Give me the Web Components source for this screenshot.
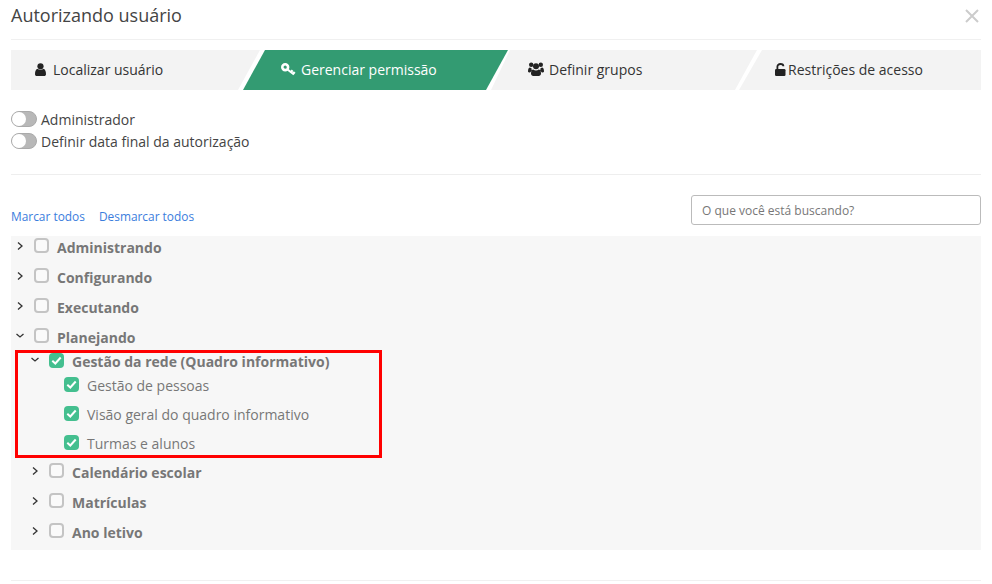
<!DOCTYPE html>
<html lang="pt-BR"><head><meta charset="utf-8"><title>Autorizando usuário</title>
<style>
html,body{margin:0;height:584px;overflow:hidden;background:#fff;font-family:"Open Sans",sans-serif;color:#333}
</style></head><body>
<auth-modal></auth-modal>
<script>
const def=(name,html)=>customElements.define(name,class extends HTMLElement{
  constructor(){super();this.attachShadow({mode:'open'}).innerHTML=html(this);}
});
const ICONS={
 user:'<svg width="11" height="13" viewBox="0 0 11 13"><circle cx="5.5" cy="3.3" r="3.1" fill="#222"/><path d="M0 11.2C0 8 1 6.2 2.6 5.8 3.4 6.5 4.4 7 5.5 7s2.100-.5 2.900-1.200C10 6.200 11 8 11 11.200 11 12.300 10.200 13 9.200 13H1.800C.8 13 0 12.300 0 11.200Z" fill="#222"/></svg>',
 key:'<svg width="15" height="13" viewBox="0 0 15 13"><circle cx="4.200" cy="4.200" r="2.900" fill="none" stroke="#fff" stroke-width="2.600"/><path d="M6.500 6.500 13 11.500M10 9l1.600-1.800M12.200 10.800l1.500-1.700" fill="none" stroke="#fff" stroke-width="2.200"/></svg>',
 group:'<svg width="16" height="14" viewBox="0 0 16 14"><g fill="#222"><circle cx="3.200" cy="2.800" r="2.200"/><circle cx="12.800" cy="2.800" r="2.200"/><path d="M0 9.500C0 7 .8 5.600 2 5.600c.6.500 1 .7 1.700.8-.3.800-.1 1.800.6 2.600C3 9.400 2.300 10.200 2.100 10.500 1 10.500 0 10.300 0 9.500ZM16 9.500C16 7 15.200 5.600 14 5.600c-.6.500-1 .7-1.700.8.300.8.100 1.800-.6 2.600 1.300.4 2 1.200 2.200 1.500 1.100 0 2.100-.2 2.100-1Z"/><circle cx="8" cy="4.300" r="3"/><path d="M3 11.500C3 9.200 4 7.800 5.200 7.600 6 8.200 7 8.500 8 8.500s2-.3 2.800-.9C12 7.800 13 9.200 13 11.500c0 1.500-1 2.500-2.300 2.500H5.300C4 14 3 13 3 11.500Z"/></g></svg>',
 unlock:'<svg width="11" height="13" viewBox="0 0 11 13"><path d="M2.400 6.500V3.600C2.400 1.900 3.700 1 5.400 1S8.400 1.900 8.400 3.200" fill="none" stroke="#222" stroke-width="1.800"/><rect x="0" y="6" width="10.500" height="7" rx="1.200" fill="#222"/></svg>'
};
def('wizard-tab',h=>`<style>
:host{display:flex;align-items:center;height:40px;box-sizing:border-box;padding-bottom:2px;background:#f3f3f3;color:#333;font-size:14px;white-space:nowrap;flex:none}
:host([active]){background:#339b72;color:#fff}
.i{display:flex;margin-right:var(--g,7px)}
</style><span class="i">${ICONS[h.getAttribute('icon')]}</span><slot></slot>`);
def('wizard-steps',()=>`<style>
:host{display:flex;margin:0 11px;height:40px}
::slotted(wizard-tab){margin-left:-17px}
::slotted(wizard-tab:first-child){margin-left:0;width:249px;padding-left:24px;clip-path:polygon(0 0,100% 0,calc(100% - 22px) 100%,0 100%)}
::slotted(wizard-tab:nth-child(2)){width:265px;padding-left:38px;clip-path:polygon(22px 0,100% 0,calc(100% - 22px) 100%,0 100%)}
::slotted(wizard-tab:nth-child(3)){margin-left:-17px;width:266px;padding-left:37px;clip-path:polygon(19px 0,100% 0,calc(100% - 22px) 100%,0 100%)}
::slotted(wizard-tab:nth-child(4)){margin-left:-18px;width:242px;padding-left:36px;clip-path:polygon(23px 0,100% 0,100% 100%,0 100%)}
</style><slot></slot>`);
def('toggle-line',()=>`<style>
:host{display:flex;align-items:center;height:22px;font-size:14px;color:#444}
.t{width:26px;height:16px;box-sizing:border-box;border-radius:8px;background:#b8b8b8;border:1px solid #aaa;margin-right:4px;flex:none}
.k{display:block;width:14px;height:14px;border-radius:50%;background:#fff}
</style><span class="t"><span class="k"></span></span><slot></slot>`);
def('tree-row',h=>{
 const lvl=+h.getAttribute('level')||0,st=h.getAttribute('state');
 const chev=st==='open'?'<path d="M.5 2 4 5 7.500 2"/>':st==='closed'?'<path d="M2 .5 6 4 2 7.500"/>':'';
 const on=h.hasAttribute('checked');
 return `<style>
:host{display:flex;align-items:center;height:22px;padding-left:${lvl*15}px;font-size:14px;color:#777;white-space:nowrap}
:host([bold]){font-weight:700}
.c{width:8px;height:8px;margin:-3px 10px 0 5px;flex:none;display:block}
.c path{fill:none;stroke:#333;stroke-width:1.300}
.b{width:15px;height:15px;box-sizing:border-box;border:2px solid #c4c4c4;border-radius:4px;background:#fafafa;margin:var(--m,-3px) 8px 0 0;flex:none;display:flex}
.b.on{background:#44bf8f;border:0}
.s{width:23px;flex:none}
</style>${chev?`<svg class="c" viewBox="0 0 8 8">${chev}</svg>`:'<span class="s"></span>'}<span class="b ${on?'on':''}">${on?'<svg width="15" height="15" viewBox="0 0 15 15"><path d="M3.300 7.800 6.300 10.500 11.700 4.500" fill="none" stroke="#fff" stroke-width="2"/></svg>':''}</span><slot></slot>`;
});
def('auth-modal',()=>`<style>
:host{display:block;height:584px;overflow:hidden;box-sizing:border-box}
.head{display:flex;justify-content:space-between;align-items:center;height:30px;margin:0 11px;border-bottom:1px solid #f0f0f0;padding-bottom:9px}
h1{margin:0;font-size:18px;font-weight:400;color:#444;line-height:30px}
.x{display:block;margin-right:2px;margin-top:2px}
wizard-steps{margin-top:10px}
.tog{margin:18px 11px 0;display:block}
.sep{height:1px;background:#eee;margin:22px 11px 0}
.bar{display:flex;justify-content:space-between;align-items:flex-end;margin:20px 11px 0;height:30px}
.links{display:flex;gap:14px;font-size:11.9px;color:#3b7ddd;line-height:16px;margin-bottom:1px}
.links a{color:inherit;text-decoration:none}
.search{width:290px;height:30px;box-sizing:border-box;border:1px solid #bbb;border-radius:3px;padding-left:10px;display:flex;align-items:center;font-size:12px;color:#777}
.tree{background:#f7f7f7;margin:11px 11px 0;height:314px;box-sizing:border-box}
.tree>tree-row{margin-bottom:8px}
.tree>tree-row.p{margin-bottom:2px}
.hl{width:367px;box-sizing:border-box;height:108px;border:3px solid #f00;margin-left:4px;margin-bottom:3px}
.hl tree-row{margin-left:-7px;margin-top:7px;--m:-1px}
.hl tree-row:first-child{margin-top:-1px;height:18px}
.hl tree-row:nth-child(2){margin-top:4px}
.foot{height:1px;background:#f0f0f0;margin:30px 11px 0}
</style>
<div class="head"><h1>Autorizando usuário</h1><svg class="x" width="14" height="14" viewBox="0 0 14 14"><path d="M1 1 13 13M13 1 1 13" stroke="#ccc" stroke-width="2"/></svg></div>
<wizard-steps>
<wizard-tab icon="user">Localizar usuário</wizard-tab>
<wizard-tab icon="key" active style="--g:5px">Gerenciar permissão</wizard-tab>
<wizard-tab icon="group" style="--g:5px">Definir grupos</wizard-tab>
<wizard-tab icon="unlock" style="--g:2px">Restrições de acesso</wizard-tab>
</wizard-steps>
<div class="tog"><toggle-line>Administrador</toggle-line><toggle-line>Definir data final da autorização</toggle-line></div>
<div class="sep"></div>
<div class="bar"><div class="links"><a>Marcar todos</a><a>Desmarcar todos</a></div><div class="search">O que você está buscando?</div></div>
<div class="tree">
<tree-row bold state="closed">Administrando</tree-row>
<tree-row bold state="closed">Configurando</tree-row>
<tree-row bold state="closed">Executando</tree-row>
<tree-row class="p" bold state="open">Planejando</tree-row>
<div class="hl">
<tree-row bold level="1" state="open" checked>Gestão da rede (Quadro informativo)</tree-row>
<tree-row checked style="padding-left:30px">Gestão de pessoas</tree-row>
<tree-row checked style="padding-left:30px">Visão geral do quadro informativo</tree-row>
<tree-row checked style="padding-left:30px">Turmas e alunos</tree-row>
</div>
<tree-row bold level="1" state="closed">Calendário escolar</tree-row>
<tree-row bold level="1" state="closed">Matrículas</tree-row>
<tree-row bold level="1" state="closed">Ano letivo</tree-row>
</div>
<div class="foot"></div>`);
</script></body></html>
